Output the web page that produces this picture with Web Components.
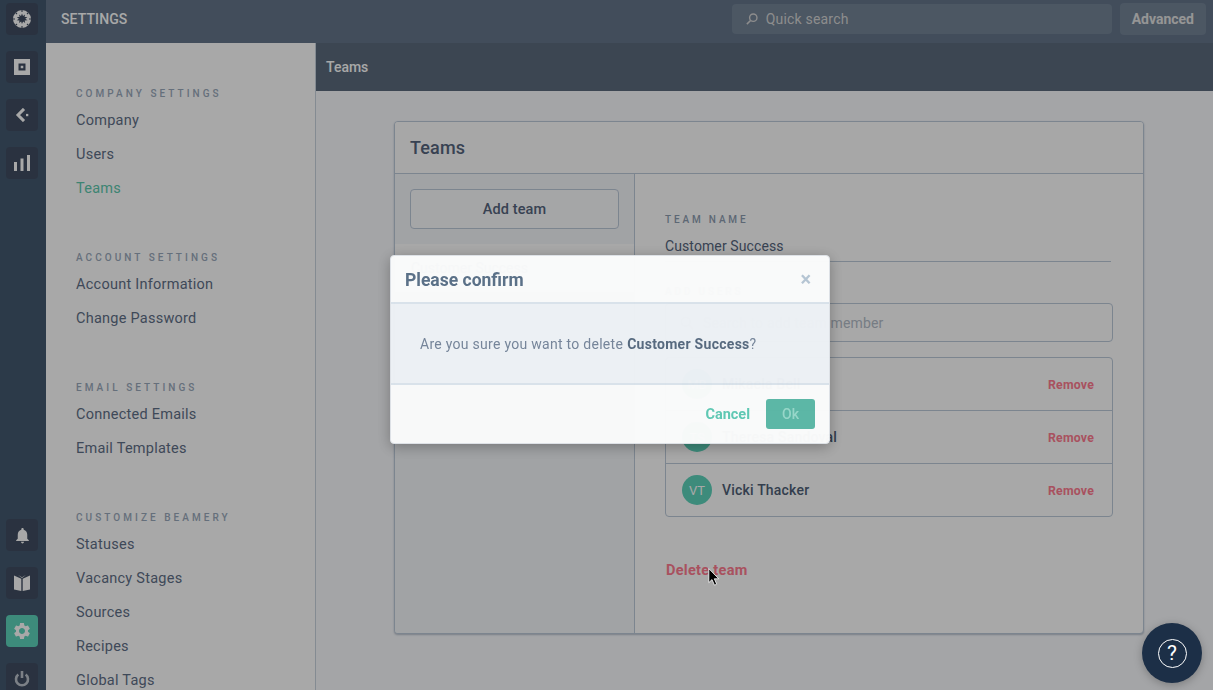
<!DOCTYPE html>
<html lang="en">
<head>
<meta charset="utf-8">
<title>Settings - Teams</title>
<style>
    html, body {
        margin: 0;
        height: 100%;
        overflow: hidden;
        font-family: Roboto, "Liberation Sans", sans-serif;
    }
</style>
</head>
<body>
<settings-page></settings-page>

<script>
'use strict'

// Iconos de la barra lateral
const ICONS = {
    logo: `<svg viewBox="0 0 18 18" width="18" height="18"><circle cx="9" cy="9" r="9" fill="currentColor"/><path fill="#404d61" d="M9 3.600 10 6l2-1.400-.4 2.500 2.800-.1-2.100 1.700 2.200 1.600-2.800.1.500 2.500-2.100-1.400L9 14l-.9-2.500-2.100 1.400.5-2.500-2.800-.1 2.200-1.600-2.100-1.700 2.800.1L6 4.600 8 6z"/><path stroke="#404d61" stroke-width="1.100" d="M9 0v2M15.400 2.600 14 4M18 9h-2M15.400 15.400 14 14M9 18v-2M2.600 15.400 4 14M0 9h2M2.600 2.600 4 4"/></svg>`,
    square: `<svg viewBox="0 0 16 16" width="16" height="16"><path fill="currentColor" fill-rule="evenodd" d="M0 0h16v16H0zM4.500 4.500v7h7v-7zM6.700 6.700h2.600v2.600H6.700z"/></svg>`,
    back: `<svg viewBox="0 0 14 14" width="14" height="14"><path fill="none" stroke="currentColor" stroke-width="3" d="M9 .9 3 7l6 6.100"/><rect x="11" y="5.900" width="2.300" height="2.300" fill="currentColor"/></svg>`,
    bars: `<svg viewBox="0 0 16 16" width="16" height="16"><path fill="currentColor" d="M0 7h3v9H0zM6.500 3.500h3V16h-3zM13 0h3v16h-3z"/></svg>`,
    bell: `<svg viewBox="0 0 24 24" width="19" height="19"><path fill="currentColor" d="M12 22c1.100 0 2-.9 2-2h-4c0 1.100.9 2 2 2zm6-6v-5c0-3.070-1.630-5.640-4.500-6.320V4c0-.83-.67-1.500-1.500-1.500s-1.500.67-1.500 1.500v.68C7.640 5.360 6 7.920 6 11v5l-2 2v1h16v-1l-2-2z"/></svg>`,
    book: `<svg viewBox="0 0 16 16" width="16" height="16"><path fill="currentColor" d="M0 .6 7.300 3.800V16L0 14.400zM16 .6 8.700 3.800V16l7.300-1.600zM4.200 0 8 2.200 11.800 0 8 3.100z"/></svg>`,
    gear: `<svg viewBox="0 0 24 24" width="20" height="20"><path fill="currentColor" d="M19.140 12.940c.04-.3.06-.61.06-.94 0-.32-.02-.64-.07-.94l2.030-1.580c.18-.14.23-.41.12-.61l-1.920-3.320c-.12-.22-.37-.29-.59-.22l-2.390.96c-.5-.38-1.030-.7-1.620-.94l-.36-2.540c-.04-.24-.24-.41-.48-.41h-3.840c-.24 0-.43.17-.47.41l-.36 2.540c-.59.24-1.130.57-1.620.94l-2.390-.96c-.22-.08-.47 0-.59.22L2.740 8.870c-.12.21-.08.47.12.61l2.030 1.580c-.05.3-.09.63-.09.94s.02.64.07.94l-2.030 1.580c-.18.14-.23.41-.12.61l1.920 3.320c.12.22.37.29.59.22l2.390-.96c.5.38 1.030.7 1.620.94l.36 2.540c.05.24.24.41.48.41h3.840c.24 0 .44-.17.47-.41l.36-2.540c.59-.24 1.130-.56 1.620-.94l2.390.96c.22.08.47 0 .59-.22l1.920-3.320c.12-.22.07-.47-.12-.61l-2.010-1.580zM12 15.600c-1.980 0-3.600-1.620-3.600-3.600s1.620-3.600 3.600-3.600 3.600 1.620 3.600 3.600-1.620 3.600-3.600 3.600z"/></svg>`,
    power: `<svg viewBox="0 0 16 16" width="16" height="16"><path fill="none" stroke="currentColor" stroke-width="2.600" d="M4.300 3.600a6 6 0 1 0 7.400 0M8 0v7"/></svg>`
};

// Crea un componente sencillo a partir de su plantilla
function defineSimple(name, template) {
    customElements.define(name, class extends HTMLElement {
        constructor() {
            super();
            this.attachShadow({ mode: 'open' });
        }
        connectedCallback() {
            this.shadowRoot.innerHTML = typeof template === 'function' ? template(this) : template;
        }
    });
}

defineSimple('rail-button', el => `
    <style>
        :host { display: flex; align-items: center; justify-content: center; width: 32px; height: 32px;
            border-radius: 4px; background: #404d61; color: #fff; flex: none; }
        :host([active]) { background: #5dd3bb; }
        :host([dim]) { color: #bcc3cc; }
    </style>
    ${ICONS[el.getAttribute('icon')]}`);

defineSimple('nav-rail', `
    <style>
        :host { display: flex; flex-direction: column; justify-content: space-between; align-items: center;
            width: 46px; flex: none; height: 100%; background: #43586f; padding: 3px 2px 0 0; box-sizing: border-box; overflow: hidden; }
        .group { display: flex; flex-direction: column; gap: 16px; }
        .bottom { margin-bottom: -5px; }
    </style>
    <div class="group">
        <rail-button icon="logo"></rail-button>
        <rail-button icon="square"></rail-button>
        <rail-button icon="back"></rail-button>
        <rail-button icon="bars"></rail-button>
    </div>
    <div class="group bottom">
        <rail-button icon="bell"></rail-button>
        <rail-button icon="book"></rail-button>
        <rail-button icon="gear" active></rail-button>
        <rail-button icon="power" dim></rail-button>
    </div>`);

defineSimple('top-bar', `
    <style>
        :host { display: flex; align-items: center; height: 43px; flex: none; background: #64768b;
            color: #fff; padding: 0 7px 0 15px; box-sizing: border-box; }
        .title { font-size: 14px; font-weight: 500; flex: 1; margin-top: -5px; letter-spacing: .1px; }
        .search { display: flex; align-items: center; gap: 8px; width: 380px; height: 30px; margin-top: -5px; box-sizing: border-box;
            padding-left: 14px; background: #748497; border-radius: 4px; color: #d6d6d6; font-size: 14px; letter-spacing: .2px; }
        .adv { display: flex; align-items: center; height: 32px; margin: -5px 0 0 8px; padding: 0 12px 0 12px; background: #748497;
            border-radius: 4px; font-size: 14px; font-weight: 700; color: #e2e2e2; }
    </style>
    <div class="title"><slot></slot></div>
    <div class="search">
        <svg viewBox="0 0 14 14" width="12" height="12"><circle cx="8.500" cy="5.500" r="4.300" fill="none" stroke="currentColor" stroke-width="1.600"/><path d="M5.300 8.700 1 13" stroke="currentColor" stroke-width="1.800"/></svg>
        Quick search
    </div>
    <div class="adv">Advanced</div>`);

defineSimple('nav-section', el => `
    <style>
        :host { display: block; margin-bottom: 46px; }
        .label { height: 12px; line-height: 12px; font-size: 10px; font-weight: 500; letter-spacing: 3.05px; color: #9aa9bb; text-transform: uppercase; margin-bottom: 4px; }
        ::slotted(a) { display: block; height: 34px; line-height: 34px; font-size: 14.500px; letter-spacing: .25px; color: #5f6f87; text-decoration: none; }
        ::slotted(a.on) { color: #5dc9ae; }
    </style>
    <div class="label">${el.getAttribute('label')}</div>
    <slot></slot>`);

defineSimple('settings-nav', `
    <style>
        :host { display: block; width: 270px; flex: none; box-sizing: border-box; height: 100%; overflow: hidden;
            background: #fff; border-right: 1px solid #c9d3de; padding: 45px 0 0 30px; }
    </style>
    <slot></slot>`);

defineSimple('member-row', el => `
    <style>
        :host { display: flex; align-items: center; height: 53px; box-sizing: border-box; padding: 0 18px 0 16px;
            border-top: 1px solid #bccada; }
        :host(:first-child) { border-top: 0; height: 52px; }
        .avatar { width: 30px; height: 30px; border-radius: 50%; background: #5dd3bb; color: #fff; font-size: 13px;
            display: flex; align-items: center; justify-content: center; flex: none; }
        .name { flex: 1; margin-left: 10px; font-size: 14px; font-weight: 500; letter-spacing: .2px; color: #4f5f77; }
        .remove { margin-top: 2px; font-size: 12.300px; font-weight: 700; letter-spacing: .2px; color: #ff7c90; }
    </style>
    <div class="avatar">${el.getAttribute('initials')}</div>
    <div class="name"><slot></slot></div>
    <div class="remove">Remove</div>`);

defineSimple('team-detail', `
    <style>
        :host { display: block; flex: 1; box-sizing: border-box; padding: 40px 30px 0 30px; }
        .label { font-size: 10px; height: 12px; line-height: 12px; font-weight: 500; letter-spacing: 2.85px; color: #8d9db1; text-transform: uppercase; }
        .value { margin: 10px 2px 0 0; height: 26px; line-height: 20px; box-sizing: border-box; font-size: 14px; letter-spacing: .1px; color: #55657d; border-bottom: 1px solid #bccada; }
        .add { margin-top: 24px; }
        .search { display: flex; align-items: center; gap: 9px; height: 39px; margin-top: 5px; box-sizing: border-box; padding-left: 14px;
            border: 1px solid #bccada; border-radius: 4px; font-size: 14px; letter-spacing: .15px; color: #b4bdc9; }
        .list { margin-top: 15px; border: 1px solid #bccada; border-radius: 4px; }
        .delete { display: block; margin: 45px 0 0 1px; font-size: 14.500px; font-weight: 700; letter-spacing: .3px; color: #ff7c90; }
    </style>
    <div class="label">Team name</div>
    <div class="value">Customer Success</div>
    <div class="label add">Add users</div>
    <div class="search">
        <svg viewBox="0 0 16 16" width="14" height="14"><circle cx="6.500" cy="6.500" r="5" fill="none" stroke="currentColor" stroke-width="1.300"/><path d="m10.200 10.200 5 5" stroke="currentColor" stroke-width="1.300"/></svg>
        Search to add team member
    </div>
    <div class="list"><slot></slot></div>
    <span class="delete">Delete team</span>`);

defineSimple('teams-card', `
    <style>
        :host { display: flex; flex-direction: column; width: 750px; height: 513px; box-sizing: border-box; background: #fff;
            border: 1px solid #bccada; border-radius: 4px; box-shadow: 0 1px 2px rgba(60, 80, 110, .35); overflow: hidden; }
        .head { height: 52px; flex: none; display: flex; align-items: center; padding: 0 0 1px 15px; box-sizing: border-box;
            font-size: 18px; font-weight: 500; letter-spacing: .15px; color: #55657d; border-bottom: 1px solid #bccada; background: #fdfdfe; }
        .body { flex: 1; display: flex; min-height: 0; }
        .side { width: 240px; flex: none; box-sizing: border-box; background: #f5f7fa; border-right: 1px solid #bccada; }
        .top { height: 70px; padding: 15px; box-sizing: border-box; background: #f5f7fa; }
        .btn { display: flex; align-items: center; justify-content: center; height: 40px; box-sizing: border-box; border: 1px solid #bccada; border-radius: 4px;
            font-size: 14.500px; font-weight: 500; letter-spacing: .1px; color: #55657d; background: #fbfcfd; }
        .item { height: 48px; display: flex; align-items: center; padding-left: 16px; font-size: 14px; color: #55657d; background: #fff; }
    </style>
    <div class="head">Teams</div>
    <div class="body">
        <div class="side">
            <div class="top"><div class="btn">Add team</div></div>
            <div class="item">Customer Success</div>
        </div>
        <slot></slot>
    </div>`);

defineSimple('confirm-modal', `
    <style>
        :host { position: absolute; left: 390px; top: 255px; width: 440px; height: 189px; box-sizing: border-box; display: flex; flex-direction: column;
            background: #fbfcfc; border: 1px solid #dfe3e8; border-radius: 4px; box-shadow: 0 3px 14px rgba(0, 0, 0, .28); overflow: hidden;
            filter: blur(.45px); opacity: .975; }
        header { height: 48px; flex: none; display: flex; align-items: center; justify-content: space-between; box-sizing: border-box; padding: 1px 18px 0 14px;
            font-size: 17.500px; font-weight: 700; color: #5a7088; border-bottom: 2px solid #dbe4ec; }
        .close { color: #b6c6d5; font-size: 20px; line-height: 1; font-weight: 700; margin-top: -1px; }
        main { height: 81px; flex: none; display: flex; align-items: center; box-sizing: border-box; padding: 1px 0 0 29px; background: #eef2f6;
            font-size: 14px; letter-spacing: .28px; color: #75859a; border-bottom: 2px solid #dbe4ec; }
        b { color: #56697f; font-weight: 700; margin-left: 4px; }
        footer { flex: 1; display: flex; align-items: center; justify-content: flex-end; padding-right: 14px; gap: 16px; }
        .cancel { font-size: 14.500px; font-weight: 700; color: #5ec9b4; }
        .ok { display: flex; align-items: center; justify-content: center; width: 49px; height: 30px; border-radius: 3px;
            background: #5bb8a6; color: #97d8ca; font-size: 14px; font-weight: 500; }
    </style>
    <header>Please confirm<span class="close">&#215;</span></header>
    <main>Are you sure you want to delete <b>Customer Success</b>?</main>
    <footer><span class="cancel">Cancel</span><span class="ok">Ok</span></footer>`);

defineSimple('help-fab', `
    <style>
        :host { position: absolute; right: 11px; bottom: 7px; width: 60px; height: 60px; border-radius: 50%; background: #1c2f47;
            display: flex; align-items: center; justify-content: center; box-shadow: 0 2px 8px rgba(0, 0, 0, .25); }
        .ring { width: 27px; height: 27px; border: 1.500px solid #fff; border-radius: 50%; display: flex; align-items: center; justify-content: center;
            color: #fff; font-size: 21px; font-weight: 400; }
    </style>
    <div class="ring">?</div>`);

defineSimple('settings-page', `
    <style>
        :host { display: flex; position: relative; width: 100vw; height: 100vh; overflow: hidden; }
        .right { flex: 1; display: flex; flex-direction: column; min-width: 0; }
        .below { flex: 1; display: flex; min-height: 0; }
        .content { flex: 1; display: flex; flex-direction: column; background: #f9fbfe; min-width: 0; }
        .crumb { height: 48px; flex: none; display: flex; align-items: center; padding-left: 10px; background: #5c6b7d;
            color: #fff; font-size: 14px; font-weight: 500; }
        .area { padding: 30px 0 0 78px; }
        .veil { position: absolute; inset: 0; background: rgba(0, 0, 0, .34); }
        .cursor { position: absolute; left: 708px; top: 568px; }
    </style>
    <nav-rail></nav-rail>
    <div class="right">
        <top-bar>SETTINGS</top-bar>
        <div class="below">
            <settings-nav>
                <nav-section label="Company settings">
                    <a>Company</a><a>Users</a><a class="on">Teams</a>
                </nav-section>
                <nav-section label="Account settings">
                    <a>Account Information</a><a>Change Password</a>
                </nav-section>
                <nav-section label="Email settings">
                    <a>Connected Emails</a><a>Email Templates</a>
                </nav-section>
                <nav-section label="Customize Beamery">
                    <a>Statuses</a><a>Vacancy Stages</a><a>Sources</a><a>Recipes</a><a>Global Tags</a>
                </nav-section>
            </settings-nav>
            <div class="content">
                <div class="crumb">Teams</div>
                <div class="area">
                    <teams-card>
                        <team-detail>
                            <member-row initials="MB">Mikaela Bell</member-row>
                            <member-row initials="TS">Theresa Sandoval</member-row>
                            <member-row initials="VT">Vicki Thacker</member-row>
                        </team-detail>
                    </teams-card>
                </div>
            </div>
        </div>
    </div>
    <div class="veil"></div>
    <confirm-modal></confirm-modal>
    <help-fab></help-fab>
    <svg class="cursor" width="13" height="18" viewBox="0 0 13 18"><path d="M.8.6v14l3.200-3 2.500 5.600 2.200-1-2.400-5.400h4.400z" fill="#000" stroke="#fff" stroke-width=".8"/></svg>`);
</script>
</body>
</html>
